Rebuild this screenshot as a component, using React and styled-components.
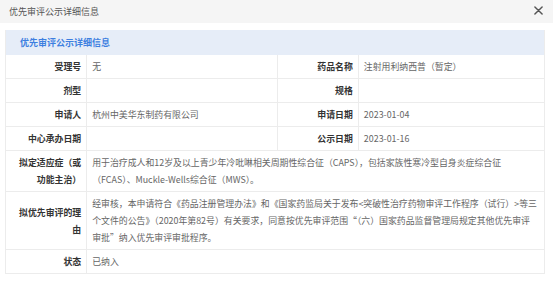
import React from 'react';
import styled, { createGlobalStyle } from 'styled-components';

const GlobalStyle = createGlobalStyle`
  html, body {
    margin: 0;
    padding: 0;
    background: #ffffff;
    font-family: "Noto Sans CJK SC", "Noto Sans", sans-serif;
  }
`;

const Keep = styled.span`
  white-space: nowrap;
`;

const rows = [
  [
    { label: '受理号', value: '无' },
    { label: '药品名称', value: '注射用利纳西普（暂定）' },
  ],
  [
    { label: '剂型', value: '' },
    { label: '规格', value: '' },
  ],
  [
    { label: '申请人', value: '杭州中美华东制药有限公司' },
    { label: '申请日期', value: '2023-01-04' },
  ],
  [
    { label: '中心承办日期', value: '' },
    { label: '公示日期', value: '2023-01-16' },
  ],
  [
    {
      label: '拟定适应症（或功能主治）',
      value:
        '用于治疗成人和12岁及以上青少年冷吡啉相关周期性综合征（CAPS），包括家族性寒冷型自身炎症综合征（FCAS）、Muckle-Wells综合征（MWS）。',
    },
  ],
  [
    {
      label: '拟优先审评的理由',
      value: (
        <>
          经审核，本申请符合《药品注册管理办法》和《国家药监局关于发布&lt;突破性治疗药物审评工作程序（试行）&gt;等三个文件的公告》（2020年第82号）有关要求，同意按优先审评范围“（六）国家药品监督管理局规定其他优先审评
          <Keep>审批”</Keep>纳入优先审评审批程序。
        </>
      ),
    },
  ],
  [{ label: '状态', value: '已纳入' }],
];

export default function App() {
  return (
    <>
      <GlobalStyle />
      <Dialog>
        <TopBar>
          <TopTitle>优先审评公示详细信息</TopTitle>
          <CloseButton aria-label="close">
            <svg width="9" height="9" viewBox="0 0 10 10">
              <path d="M1 1L9 9M9 1L1 9" stroke="#555" strokeWidth="1.6" strokeLinecap="round" />
            </svg>
          </CloseButton>
        </TopBar>
        <Body>
          <Card>
            <CardHead>优先审评公示详细信息</CardHead>
            <Table>
              <colgroup>
                <col style={{ width: '15%' }} />
                <col style={{ width: '35.5%' }} />
                <col style={{ width: '15%' }} />
                <col style={{ width: '34.5%' }} />
              </colgroup>
              <tbody>
                {rows.map((row, i) => (
                  <tr key={i}>
                    {row.map((cell) => (
                      <React.Fragment key={cell.label}>
                        <Label>{cell.label}</Label>
                        <Value colSpan={row.length === 1 ? 3 : 1}>{cell.value}</Value>
                      </React.Fragment>
                    ))}
                  </tr>
                ))}
              </tbody>
            </Table>
          </Card>
        </Body>
      </Dialog>
    </>
  );
}

const Dialog = styled.div`
  width: 553px;
  height: 282px;
  background: #ffffff;
  overflow: hidden;
`;

const TopBar = styled.div`
  height: 23px;
  background: #f5f5f5;
  display: flex;
  align-items: center;
  justify-content: space-between;
  padding: 0 10px 0 9px;
`;

const TopTitle = styled.div`
  font-size: 9px;
  color: #555;
`;

const CloseButton = styled.div`
  display: flex;
  align-items: center;
  margin-top: -2px;
`;

const Body = styled.div`
  padding: 7px 8px 0 5px;
`;

const Card = styled.div`
  border: 1px solid #ececec;
  border-top: none;
`;

const CardHead = styled.div`
  height: 25px;
  line-height: 25px;
  background: #e6edf8;
  color: #3d7fe0;
  font-weight: bold;
  font-size: 9px;
  padding-left: 14px;
`;

const Table = styled.table`
  width: 100%;
  border-collapse: collapse;
  table-layout: fixed;
  font-size: 8.9px;

  tr + tr td {
    border-top: 1px solid #ececec;
  }
`;

const Label = styled.td`
  text-align: right;
  font-weight: bold;
  color: #333;
  padding: 3px 5px 3px 12px;
  line-height: 17px;
  border-right: 1px solid #ececec;
  vertical-align: middle;
`;

const Value = styled.td`
  color: #666;
  padding: 3px 5px;
  line-height: 17px;
  border-right: 1px solid #ececec;
  vertical-align: middle;

  &:last-child {
    border-right: none;
  }
`;
